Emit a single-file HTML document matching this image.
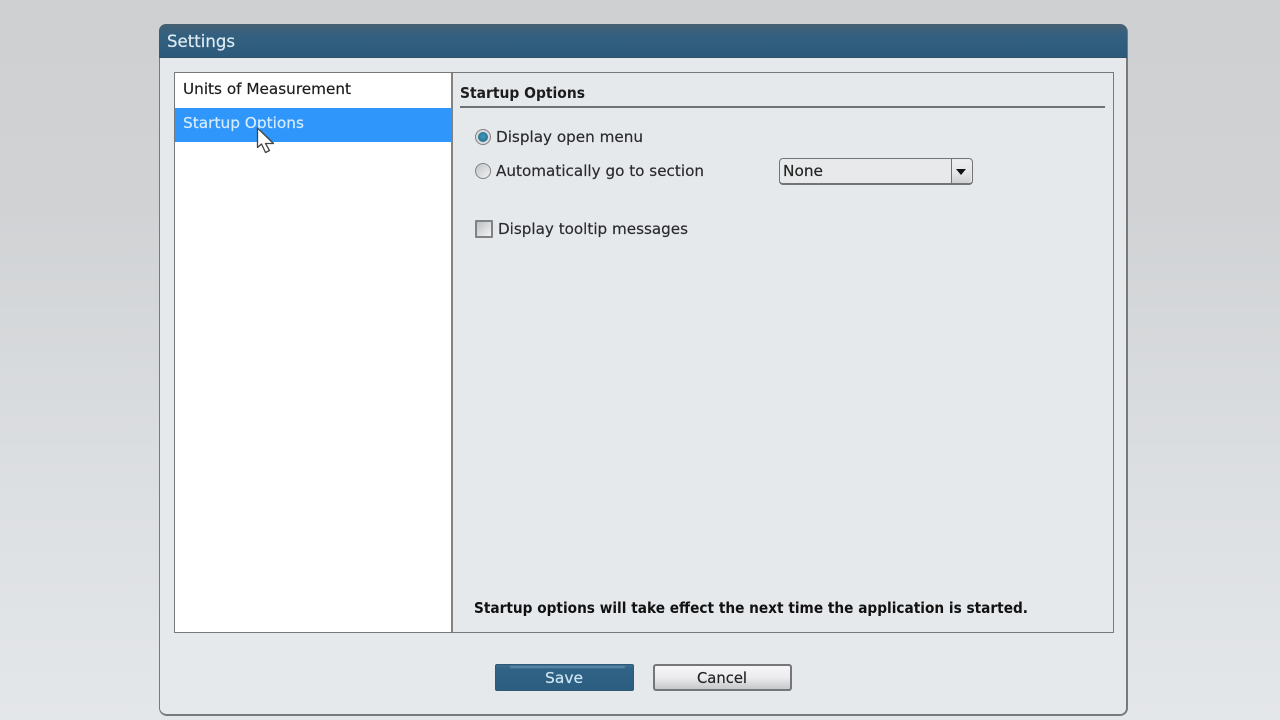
<!DOCTYPE html>
<html><head><meta charset="utf-8"><title>Settings</title>
<style>
html,body{margin:0;padding:0;width:1280px;height:720px;overflow:hidden}
body{position:relative;background:linear-gradient(180deg,#cfd0d1 0,#d0d2d4 200px,#dcdfe2 480px,#e4e7ea 720px)}
div{position:absolute;box-sizing:border-box}
svg{position:absolute;left:0;top:0}
text{font-family:"DejaVu Sans","Liberation Sans",sans-serif;font-size:15.5px;stroke-width:.18px;filter:blur(.3px)}
</style></head><body>
<div style="left:159px;top:24px;width:969px;height:692px;background:#e6e9ec;border:solid #77797b;border-width:0 2px 2px 1px;border-radius:8px"></div>
<div style="left:159px;top:24px;width:968px;height:34px;border-radius:7px 7px 0 0;background:linear-gradient(180deg,#48606f 0,#3e6078 4px,#33607f 12px,#2c5a7b 100%);border-bottom:1px solid #2f5068"></div>
<div style="left:174px;top:72px;width:940px;height:561px;background:#e6e9ec;border:1px solid #77797b"></div>
<div style="left:175px;top:73px;width:278px;height:559px;background:#fff;border-right:2px solid #808284"></div>
<div style="left:175px;top:108px;width:276px;height:34px;background:#2f97fb"></div>
<div style="left:460px;top:106px;width:645px;height:2px;background:#707173"></div>

<div style="left:475px;top:129px;width:16px;height:16px;border-radius:50%;border:1.5px solid #808284;background:#d9dcdf"></div>
<div style="left:478px;top:132px;width:10px;height:10px;border-radius:50%;background:radial-gradient(circle at 50% 45%,#3f9cc0,#1f5f7e);filter:blur(.3px)"></div>
<div style="left:475px;top:163px;width:16px;height:16px;border-radius:50%;border:1.5px solid #808284;background:linear-gradient(135deg,#c0c2c5,#f2f3f4)"></div>
<div style="left:475px;top:220px;width:18px;height:18px;border:2px solid #808284;border-radius:1px;background:linear-gradient(135deg,#bfc1c4,#f2f3f4)"></div>

<div style="left:779px;top:158px;width:194px;height:27px;background:#e8e9ea;border:1px solid #727476;border-bottom:2px solid #727476;border-radius:4px"></div>
<div style="left:951px;top:159px;width:1px;height:25px;background:#707274"></div>
<div style="left:952px;top:160px;width:19px;height:23px;background:linear-gradient(180deg,#eceded 0,#e6e7e8 50%,#cfd1d3 100%);border-radius:0 3px 3px 0"></div>

<div style="left:495px;top:664px;width:139px;height:27px;border-radius:2px;background:linear-gradient(180deg,#3a6a8c 0,#2f6285 20%,#2c5e82 100%);border:1px solid #2f5a76"></div>
<div style="left:510px;top:666px;width:115px;height:2px;background:#5a8cab;filter:blur(.5px)"></div>
<div style="left:653px;top:664px;width:139px;height:27px;border-radius:3px;background:linear-gradient(180deg,#f6f6f8 0,#ececef 50%,#c6c8ca 100%);border:2px solid #747678"></div>

<svg width="1280" height="720" viewBox="0 0 1280 720">
<text x="167" y="47" textLength="68" lengthAdjust="spacingAndGlyphs" fill="#dfecf3" stroke="#dfecf3" style="font-size:16.5px">Settings</text>
<text x="183" y="94" textLength="168" lengthAdjust="spacingAndGlyphs" fill="#1c1c1c" stroke="#1c1c1c">Units of Measurement</text>
<text x="183" y="128" textLength="121" lengthAdjust="spacingAndGlyphs" fill="#d8ecff" stroke="#d8ecff">Startup Options</text>
<text x="460" y="98" textLength="125" lengthAdjust="spacingAndGlyphs" fill="#1c1c1c" font-weight="bold">Startup Options</text>
<text x="496" y="142" textLength="147" lengthAdjust="spacingAndGlyphs" fill="#2a2a2c" stroke="#2a2a2c">Display open menu</text>
<text x="496" y="176" textLength="208" lengthAdjust="spacingAndGlyphs" fill="#2a2a2c" stroke="#2a2a2c">Automatically go to section</text>
<text x="783" y="176" textLength="40" lengthAdjust="spacingAndGlyphs" fill="#222" stroke="#222">None</text>
<text x="498" y="234" textLength="190" lengthAdjust="spacingAndGlyphs" fill="#2a2a2c" stroke="#2a2a2c">Display tooltip messages</text>
<text x="474" y="613" textLength="554" lengthAdjust="spacingAndGlyphs" fill="#111" font-weight="bold">Startup options will take effect the next time the application is started.</text>
<text x="545" y="683" textLength="38" lengthAdjust="spacingAndGlyphs" fill="#cfe6f2" stroke="#cfe6f2">Save</text>
<text x="697" y="683" textLength="50" lengthAdjust="spacingAndGlyphs" fill="#222" stroke="#222">Cancel</text>
<path d="M956 169h10l-5 6z" fill="#111"/>
<path d="M257.500 128V147.500L261.500 144L265.500 152.500L269.500 150.500L265.500 143.500L273.500 143.500Z" fill="#fff" stroke="#444" stroke-width="1.300" stroke-linejoin="round"/>
</svg>
</body></html>
